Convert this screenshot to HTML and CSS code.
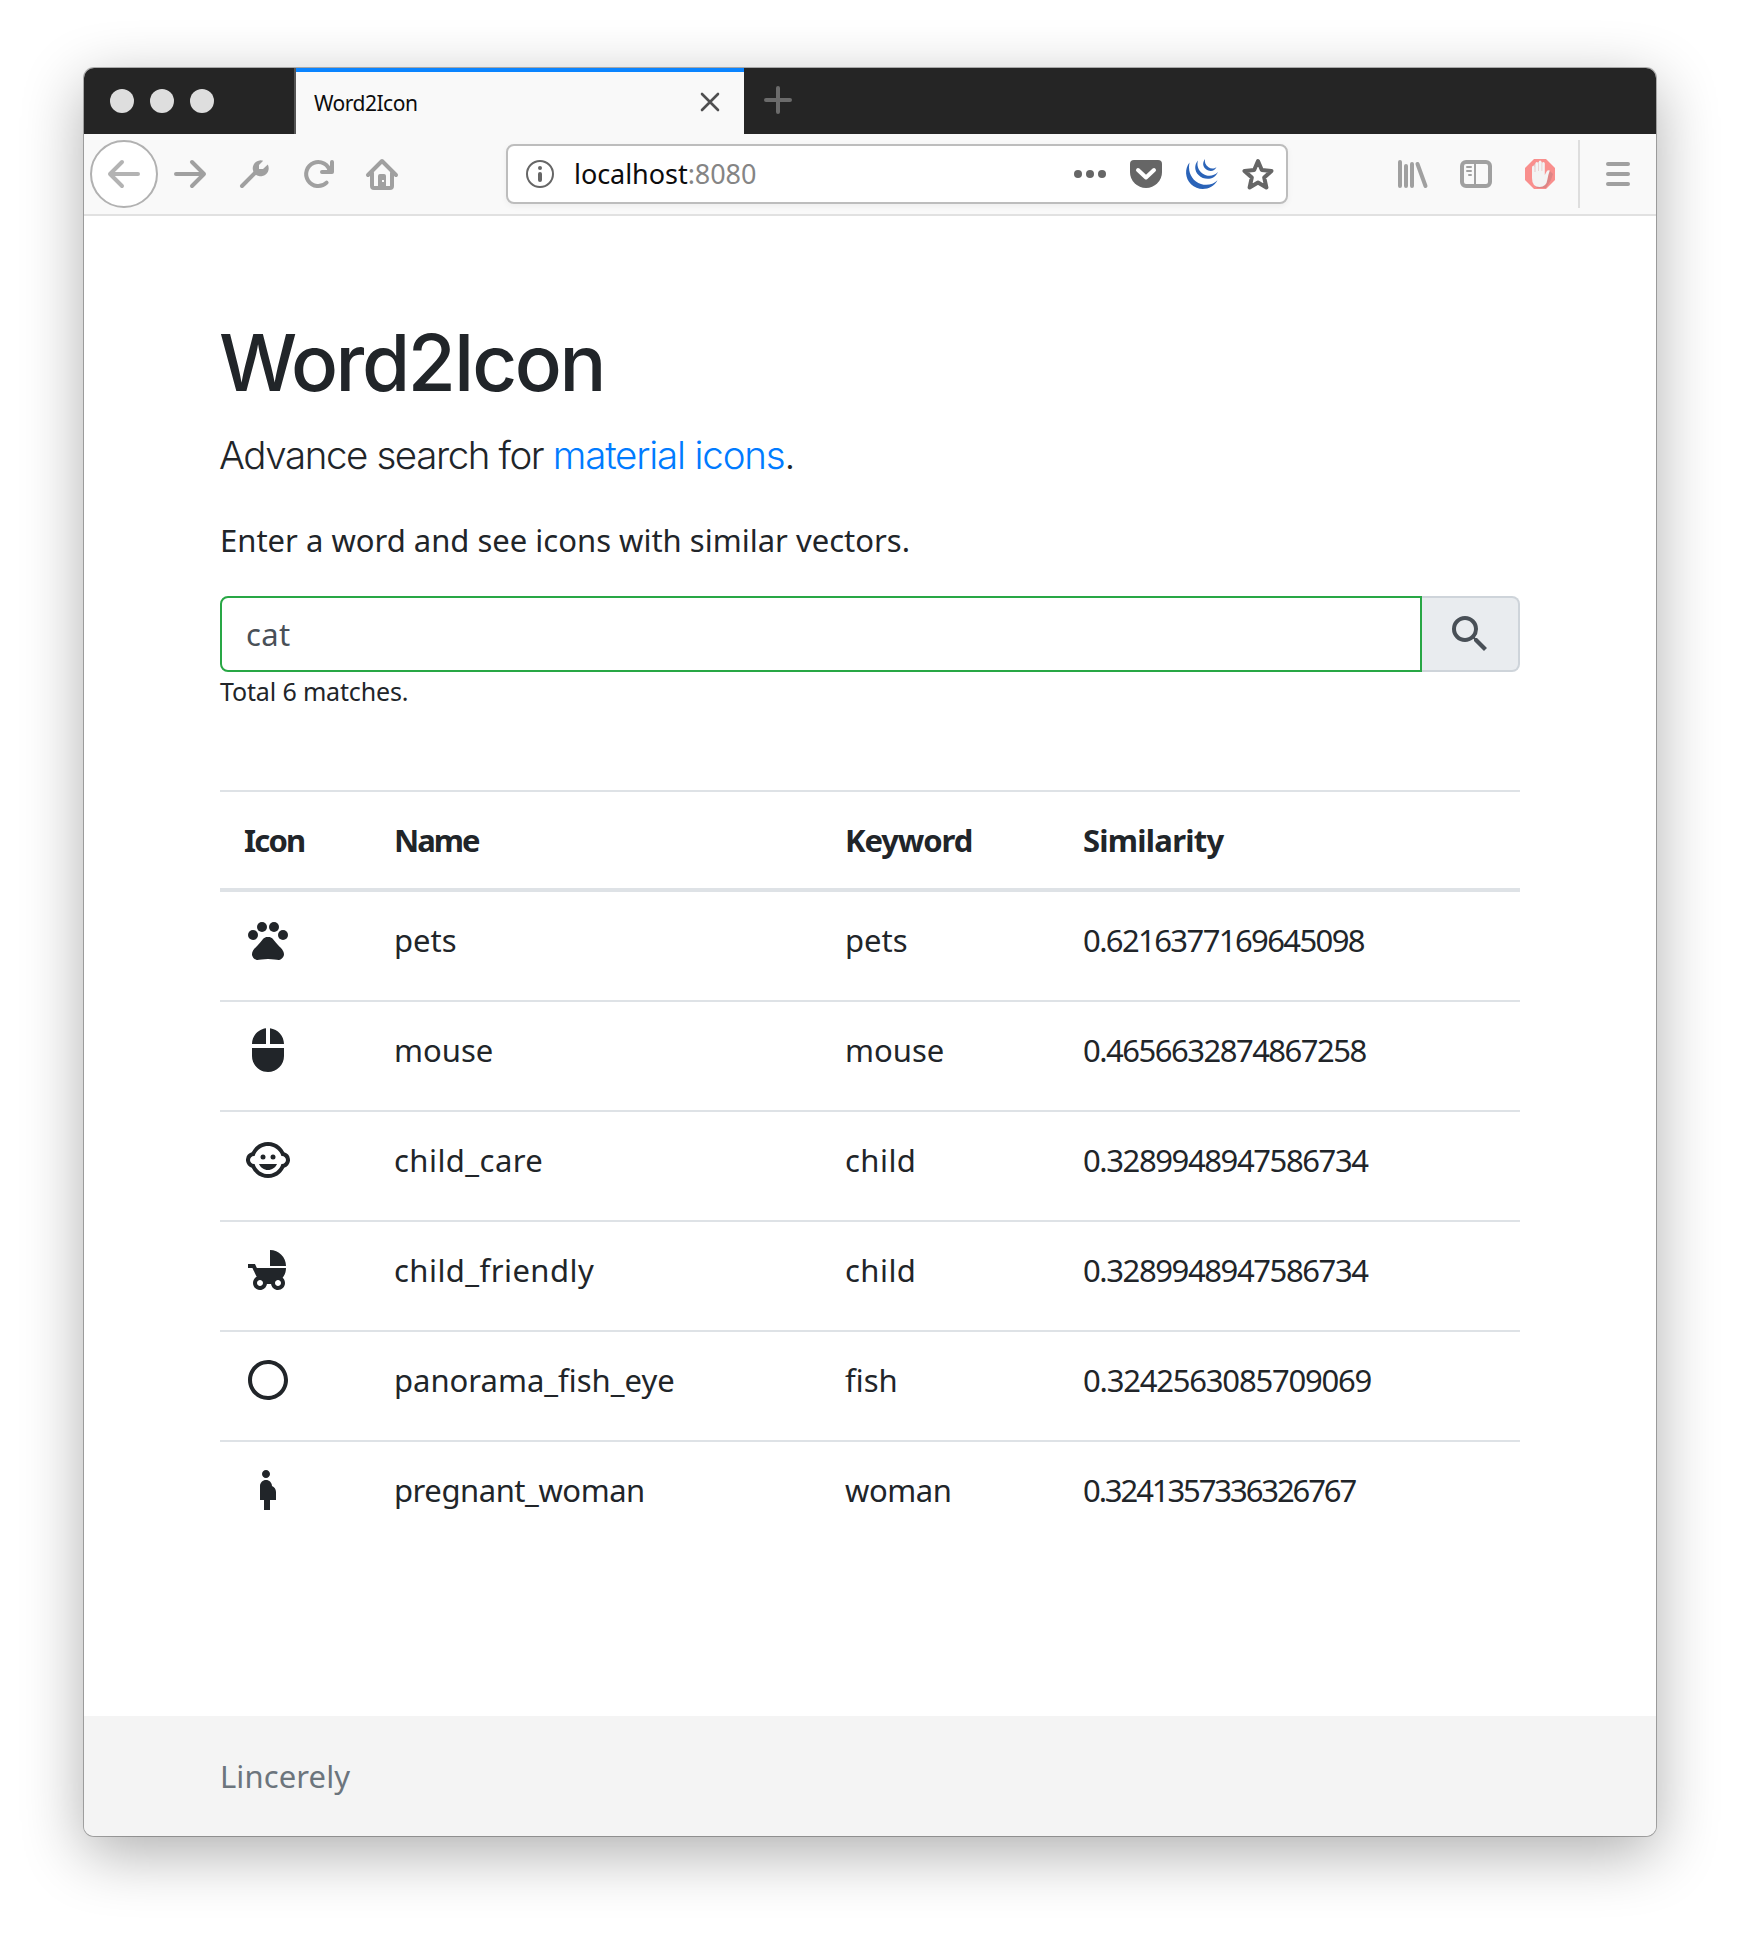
FILE: index.html
```html
<!DOCTYPE html>
<html lang="en">
<head>
<meta charset="utf-8">
<title>Word2Icon</title>
<link rel="stylesheet" href="styles.css">
</head>
<body>
<div class="window">
  <header class="titlebar">
    <div class="lights"><i></i><i></i><i></i></div>
    <div class="tab">
      <span class="tab-title">Word2Icon</span>
      <svg class="tab-close" viewBox="0 0 20 20"><path d="M2 2l16 16M18 2L2 18"/></svg>
    </div>
    <svg class="new-tab" viewBox="0 0 28 28"><path d="M2 14h24M14 2v24"/></svg>
  </header>

  <nav class="toolbar">
    <span class="back"><svg class="ico line" viewBox="0 0 32 32"><path d="M30 16H2M14 4L2 16l12 12"/></svg></span>
    <svg class="ico line forward" viewBox="0 0 32 32"><path d="M2 16h28M18 4l12 12-12 12"/></svg>
    <svg class="ico line" viewBox="0 0 32 32"><path d="M4 28l14-14"/><path class="solid" d="M25.2 2.7L21 7v4h4l4.800-4.400A8 8 0 1 1 25.200 2.700z"/></svg>
    <svg class="ico line" viewBox="0 0 32 32"><path d="M24.600 24.600A12 12 0 1 1 28 14"/><path d="M30 4v10H20"/><path class="solid" d="M30 7v7h-7z"/></svg>
    <svg class="ico line" viewBox="0 0 32 32"><path d="M2 17L16 3l14 14"/><path d="M6 15v13q0 2 2 2h16q2 0 2-2V15"/><path class="solid" fill-rule="evenodd" d="M12 30V18q0-2 2-2h4q2 0 2 2v12zM16 22v2h2v-2z"/></svg>

    <div class="urlbar">
      <svg class="ico info" viewBox="0 0 32 32"><circle cx="16" cy="16" r="13"/><circle class="dot" cx="16" cy="10" r="2"/><path d="M16 16v6"/></svg>
      <span class="url">localhost<span class="port">:8080</span></span>
      <svg class="ico dark" viewBox="0 0 32 32"><circle cx="4" cy="16" r="4"/><circle cx="16" cy="16" r="4"/><circle cx="28" cy="16" r="4"/></svg>
      <svg class="ico dark" viewBox="0 0 32 32"><path d="M4 2h24a4 4 0 0 1 4 4v8a16 16 0 0 1-32 0V6a4 4 0 0 1 4-4z"/><path class="chevron" d="M8 12l8 7.500 8-7.500"/></svg>
      <svg class="ico blue" viewBox="0 0 32 32"><path d="M3.500 4.500C-1.500 11-1 20 5 26.300c8 7.700 21.500 5.700 26.500-4C26 28 16.500 28.300 10 23.500 4 19 2 11.500 3.500 4.500z"/><path d="M12 2.500C8 7 8.500 13 12.500 17c6 6 16 5 19.500-3-4.500 4.500-10.500 5-15.500 1.500C12 12.500 10.500 7 12 2.500z"/><path d="M19 1c-3 4-2 8 1 10.300 4 3 8.500 2 10.500-2.300-2.500 2-5.500 2-8 .2C19.500 7.300 18.300 4 19 1z"/></svg>
      <svg class="ico star" viewBox="0 0 32 32"><path d="M16 3l3.800 9 9.700.900-7.300 6.600 2.200 10L16 24.500 7.600 29.500l2.200-10L2.500 12.900l9.700-.900z"/></svg>
    </div>

    <svg class="ico line" viewBox="0 0 32 32"><path d="M4 4v24M10 8v20M16 6v22M21.500 6l8 22"/></svg>
    <svg class="ico line" viewBox="0 0 32 32"><rect x="2" y="4" width="28" height="24" rx="4"/><path class="thin" d="M15 4v24M7 9h4M7 13h4M9 17h2"/></svg>
    <svg class="ico" viewBox="0 0 32 32">
      <path class="stop" d="M10 1h12l9 9v12l-9 9H10l-9-9V10z"/>
      <path class="hand-shadow" d="M26 13l3 3-2 6-5 8h-9l-4-5z"/>
      <path class="hand-gaps" d="M9 8l3-3 4-1.500L20 5v13H9z"/>
      <path class="hand" d="M8 9.500q0-1.800 1.200-1.800t1.300 1.800V14h1V5.500Q11.500 4 12.700 4T14 5.500V13h.8V4q0-1.500 1.300-1.500T17.500 4v9h.8V5.500q0-1.500 1.200-1.500t1.300 1.500V17l2-3.800q1-1.500 3-.7-1.500 4-2.300 8.500-1 8-8 8Q8 29 8 20z"/>
    </svg>
    <span class="divider"></span>
    <svg class="ico line" viewBox="0 0 32 32"><path d="M6 6h20M6 16h20M6 26h20"/></svg>
  </nav>

  <main class="page">
    <h1>Word2Icon</h1>
    <p class="lead">Advance search for <a>material icons</a>.</p>
    <p class="hint">Enter a word and see icons with similar vectors.</p>
    <div class="search">
      <div class="field">cat</div>
      <div class="button"><svg viewBox="0 0 24 24"><path d="M15.500 14h-.79l-.28-.27A6.471 6.471 0 0 0 16 9.500 6.500 6.500 0 1 0 9.500 16c1.610 0 3.090-.59 4.230-1.570l.27.28v.79l5 4.990L20.490 19l-4.990-5zm-6 0C7.010 14 5 11.990 5 9.500S7.010 5 9.500 5 14 7.010 14 9.500 11.990 14 9.500 14z"/></svg></div>
    </div>
    <p class="total">Total 6 matches.</p>

    <table>
      <thead>
        <tr><th class="c-icon">Icon</th><th class="c-name">Name</th><th class="c-key">Keyword</th><th class="c-sim">Similarity</th></tr>
      </thead>
      <tbody>
        <tr>
          <td><svg viewBox="0 0 24 24"><circle cx="4.500" cy="9.500" r="2.500"/><circle cx="9" cy="5.500" r="2.500"/><circle cx="15" cy="5.500" r="2.500"/><circle cx="19.500" cy="9.500" r="2.500"/><path d="M17.340 14.860c-.87-1.020-1.600-1.890-2.480-2.910-.46-.54-1.050-1.080-1.750-1.320-.11-.04-.22-.07-.33-.09-.25-.04-.52-.04-.78-.04s-.53 0-.79.050c-.11.020-.22.050-.33.090-.7.240-1.280.78-1.750 1.320-.87 1.020-1.600 1.890-2.480 2.910-1.310 1.310-2.920 2.760-2.620 4.790.29 1.020 1.020 2.030 2.330 2.320.73.150 3.060-.44 5.540-.44h.18c2.480 0 4.810.58 5.540.44 1.310-.29 2.040-1.310 2.330-2.320.31-2.040-1.300-3.490-2.610-4.800z"/></svg></td>
          <td>pets</td><td>pets</td><td>0.6216377169645098</td>
        </tr>
        <tr>
          <td><svg viewBox="0 0 24 24"><path d="M13 1.070V9h7c0-4.080-3.050-7.440-7-7.930zM4 15c0 4.420 3.580 8 8 8s8-3.580 8-8v-4H4v4zm7-13.930C7.050 1.560 4 4.920 4 9h7V1.070z"/></svg></td>
          <td>mouse</td><td>mouse</td><td>0.4656632874867258</td>
        </tr>
        <tr>
          <td><svg viewBox="0 0 24 24"><circle cx="14.500" cy="10.500" r="1.250"/><circle cx="9.500" cy="10.500" r="1.250"/><path d="M22.940 12.660c.04-.21.060-.43.060-.66s-.02-.45-.06-.66a4.008 4.008 0 0 0-2.810-3.170 9.114 9.114 0 0 0-2.190-2.910C16.360 3.850 14.280 3 12 3s-4.360.85-5.940 2.260c-.92.81-1.670 1.800-2.190 2.910a3.994 3.994 0 0 0-2.810 3.170c-.04.21-.06.43-.06.660s.02.45.060.66a4.008 4.008 0 0 0 2.810 3.170 8.977 8.977 0 0 0 2.170 2.890C7.620 20.140 9.710 21 12 21s4.380-.86 5.970-2.280c.9-.8 1.650-1.790 2.170-2.890a3.998 3.998 0 0 0 2.800-3.170zM19 14c-.1 0-.19-.02-.29-.03-.2.670-.49 1.290-.86 1.860C16.600 17.740 14.450 19 12 19s-4.600-1.260-5.850-3.170c-.37-.57-.66-1.190-.86-1.860-.1.010-.19.030-.29.030-1.100 0-2-.9-2-2s.9-2 2-2c.1 0 .19.020.29.030.2-.67.490-1.290.86-1.860C7.400 6.260 9.550 5 12 5s4.600 1.260 5.850 3.170c.37.570.66 1.190.86 1.860.1-.01.190-.03.290-.03 1.100 0 2 .9 2 2s-.9 2-2 2zM7.500 14c.76 1.770 2.490 3 4.500 3s3.740-1.230 4.500-3h-9z"/></svg></td>
          <td>child_care</td><td>child</td><td>0.3289948947586734</td>
        </tr>
        <tr>
          <td><svg viewBox="0 0 24 24"><path d="M13 2v8h8c0-4.420-3.580-8-8-8zm6.320 13.890C20.370 14.540 21 12.840 21 11H6.440l-.95-2H2v2h2.220s1.890 4.070 2.120 4.420c-1.100.59-1.840 1.750-1.840 3.080C4.500 20.430 6.070 22 8 22c1.760 0 3.220-1.300 3.460-3h2.080c.24 1.700 1.700 3 3.460 3 1.930 0 3.500-1.570 3.500-3.500 0-1.040-.46-1.970-1.180-2.610zM8 20c-.83 0-1.500-.67-1.500-1.500S7.170 17 8 17s1.500.67 1.500 1.500S8.830 20 8 20zm9 0c-.83 0-1.500-.67-1.500-1.500S16.170 17 17 17s1.500.67 1.500 1.500S17.830 20 17 20z"/></svg></td>
          <td>child_friendly</td><td>child</td><td>0.3289948947586734</td>
        </tr>
        <tr>
          <td><svg viewBox="0 0 24 24"><path d="M12 2C6.480 2 2 6.480 2 12s4.480 10 10 10 10-4.480 10-10S17.520 2 12 2zm0 18c-4.410 0-8-3.590-8-8s3.590-8 8-8 8 3.590 8 8-3.590 8-8 8z"/></svg></td>
          <td>panorama_fish_eye</td><td>fish</td><td>0.3242563085709069</td>
        </tr>
        <tr>
          <td><svg viewBox="0 0 24 24"><path d="M9 4c0-1.110.89-2 2-2s2 .89 2 2-.89 2-2 2-2-.89-2-2zm7 9c-.01-1.340-.83-2.510-2-3 0-1.660-1.340-3-3-3s-3 1.340-3 3v7h2v5h3v-5h3v-4z"/></svg></td>
          <td>pregnant_woman</td><td>woman</td><td>0.3241357336326767</td>
        </tr>
      </tbody>
    </table>
  </main>

  <footer class="footer">Lincerely</footer>
</div>
</body>
</html>
```
FILE: styles.css
```css
* { box-sizing: border-box; }

body {
  margin: 0;
  padding: 68px 84px 100px;
  background: #fff;
  color: #212529;
  font: 31px/48px "Noto Sans", sans-serif;
}

h1, p { margin: 0; }

.window {
  display: flex;
  flex-direction: column;
  height: 1768px;
  border-radius: 10px;
  background: #fff;
  box-shadow: 0 0 0 1px rgba(0, 0, 0, .28), 0 17px 62px rgba(0, 0, 0, .32);
}

/* Title bar */
.titlebar {
  display: flex;
  align-items: center;
  height: 66px;
  background: #252525;
  border-radius: 10px 10px 0 0;
}
.lights { display: flex; gap: 16px; width: 210px; padding-left: 26px; }
.lights i { width: 24px; height: 24px; border-radius: 50%; background: #dedede; }
.tab {
  display: flex;
  align-items: center;
  justify-content: space-between;
  width: 450px;
  height: 66px;
  padding: 0 24px 2px 18px;
  background: #f9f9f9;
  border-left: 2px solid #555;
  box-shadow: inset 0 4px #0a84ff;
}
.tab-title { padding-top: 5px; color: #0c0c0d; font-size: 21px; line-height: 28px; letter-spacing: -.5px; }
.tab-close { width: 20px; height: 20px; margin-top: 4px; fill: none; stroke: #4f4f50; stroke-width: 2.6; stroke-linecap: round; }
.new-tab { width: 28px; height: 28px; margin: 0 0 2px 20px; fill: none; stroke: #6b6b6b; stroke-width: 4; stroke-linecap: round; }

/* Toolbar */
.toolbar {
  display: flex;
  align-items: center;
  gap: 32px;
  height: 82px;
  padding: 0 22px 0 7px;
  background: #f9f9f9;
  border-bottom: 2px solid #e1e1e1;
}
.ico { flex: none; width: 32px; height: 32px; overflow: visible; }
.line { fill: none; stroke: #a0a0a0; stroke-width: 4; stroke-linecap: round; stroke-linejoin: round; }
.line .solid { fill: #a0a0a0; stroke: none; }
.line .thin { stroke-width: 2; }
.back {
  display: grid;
  place-items: center;
  width: 68px;
  height: 68px;
  margin-left: -1px;
  border: 2px solid #b1b1b1;
  border-radius: 50%;
  background: #fff;
}
.back .line { stroke: #b3b3b3; }
.forward { margin-left: -16px; }
.urlbar {
  display: flex;
  flex: 1;
  align-items: center;
  gap: 24px;
  height: 60px;
  margin: 0 76px;
  padding: 0 12px 0 16px;
  border: 2px solid #bdbdbd;
  border-radius: 8px;
  background: #fff;
  box-shadow: 0 2px 6px rgba(0, 0, 0, .05);
}
.info { fill: none; stroke: #666; stroke-width: 2; }
.info path { stroke-width: 4; stroke-linecap: round; }
.info .dot { fill: #666; stroke: none; }
.url { flex: 1; margin-left: -6px; color: #0c0c0d; font-size: 27px; line-height: 36px; letter-spacing: -.050px; }
.port { color: #858585; }
.dark { fill: #666; }
.chevron { fill: none; stroke: #fff; stroke-width: 4; stroke-linecap: round; stroke-linejoin: round; }
.blue { fill: #2a63b8; }
.star { fill: none; stroke: #666; stroke-width: 4; stroke-linejoin: round; }
.stop { fill: #f98f8d; }
.hand-shadow { fill: #dd8585; }
.hand-gaps { fill: #e6c9c9; }
.hand { fill: #f3f3f3; }
.divider { width: 2px; height: 68px; margin: 0 -10px; background: #dedede; }

/* Page */
.page { flex: 1; padding: 99px 136px 0; }
h1 { margin-left: -1px; font: 500 78px/96px Inter, sans-serif; letter-spacing: -2.400px; }
.lead { margin: 14px 0 0 -1px; font: 300 38.500px/60px Inter, sans-serif; letter-spacing: -1.400px; }
.lead a { color: #007bff; letter-spacing: -1.180px; }
.hint { margin-top: 31px; }
.search { display: flex; height: 76px; margin-top: 32px; }
.field {
  flex: 1;
  padding: 12px 24px;
  border: 2px solid #28a745;
  border-radius: 8px 0 0 8px;
  color: #495057;
  letter-spacing: .4px;
}
.button {
  display: grid;
  place-items: center start;
  width: 98px;
  padding-left: 24px;
  border: 2px solid #ced4da;
  border-left: 0;
  border-radius: 0 8px 8px 0;
  background: #e9ecef;
}
.button svg { width: 48px; height: 48px; fill: #495057; }
.total { font-size: 25px; line-height: 38px; letter-spacing: -.15px; }

table {
  width: 100%;
  margin-top: 80px;
  border-collapse: separate;
  border-spacing: 0;
  table-layout: fixed;
}
th, td { padding: 24px 0 24px 24px; border-top: 2px solid #dee2e6; text-align: left; vertical-align: top; }
th { height: 102px; border-bottom: 4px solid #dee2e6; letter-spacing: -1.200px; }
td { height: 110px; }
tbody tr:first-child td { height: 108px; border-top: 0; }
td svg { display: block; width: 48px; height: 48px; fill: #212529; }
.c-icon { width: 150px; letter-spacing: -1.800px; }
.c-name { width: 451px; letter-spacing: -2px; }
.c-key { width: 238px; letter-spacing: -1.100px; }
.c-sim { letter-spacing: -.750px; }
td:last-child { letter-spacing: -1.400px; }
tr:nth-child(1) td:last-child { letter-spacing: -1.600px; }
tr:nth-child(2) td:last-child { letter-spacing: -1.500px; }
tr:nth-child(5) td:last-child { letter-spacing: -1.200px; }
tr:nth-child(6) td:last-child { letter-spacing: -2.090px; }
tr:nth-child(3) td:nth-child(-n+3), tr:nth-child(4) td:nth-child(-n+3) { letter-spacing: .450px; }
tr:nth-child(6) td:nth-child(-n+3) { letter-spacing: -.450px; }

.footer {
  height: 120px;
  padding-left: 136px;
  border-radius: 0 0 10px 10px;
  background: #f4f4f4;
  color: #6c757d;
  line-height: 120px;
  letter-spacing: .1px;
}
```
